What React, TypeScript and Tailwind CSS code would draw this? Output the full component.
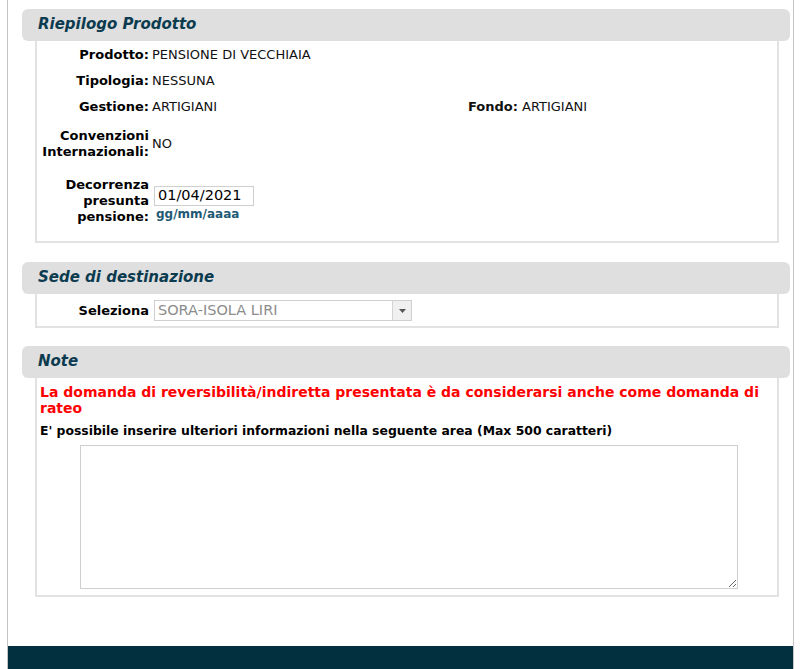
import React from "react";

const verdana = { fontFamily: '"DejaVu Sans", Verdana, sans-serif' };

function SectionHeader({ title }: { title: string }) {
  return (
    <div className="ml-[14px] mr-[3px] h-[32px] rounded-[6px] bg-[#dfdfdf] pl-[16px] pt-[3px]">
      <span className="text-[15px] font-bold italic leading-[18px] text-[#0c3b4f]">{title}</span>
    </div>
  );
}

function Label({ children }: { children: React.ReactNode }) {
  return (
    <div className="w-[112px] shrink-0 text-right text-[13px] font-bold leading-[16px] text-black">
      {children}
    </div>
  );
}

export default function App() {
  return (
    <div className="h-[669px] overflow-hidden bg-white" style={verdana}>
      <div className="ml-[7px] w-[787px] border-x border-[#c4c4c4] pt-[9px]">
        {/* Riepilogo Prodotto */}
        <SectionHeader title="Riepilogo Prodotto" />
        <div className="ml-[27px] mr-[14px] border-x-2 border-b-2 border-[#e2e2e2] pt-[1px] pb-[16px] text-[13px] text-[#111]">
          <div className="flex h-[26px] items-center">
            <Label>Prodotto:</Label>
            <span className="ml-[3px]">PENSIONE DI VECCHIAIA</span>
          </div>
          <div className="flex h-[26px] items-center">
            <Label>Tipologia:</Label>
            <span className="ml-[3px]">NESSUNA</span>
          </div>
          <div className="flex h-[26px] items-center">
            <Label>Gestione:</Label>
            <span className="ml-[3px] w-[316px]">ARTIGIANI</span>
            <span className="font-bold">Fondo:</span>
            <span className="ml-[4px]">ARTIGIANI</span>
          </div>
          <div className="flex items-center py-[8px]">
            <Label>
              Convenzioni
              <br />
              Internazionali:
            </Label>
            <span className="ml-[3px]">NO</span>
          </div>
          <div className="flex items-center pt-[9px]">
            <Label>
              Decorrenza
              <br />
              presunta
              <br />
              pensione:
            </Label>
            <div className="ml-[5px] mt-[5px] flex flex-col">
              <div className="flex h-[20px] w-[100px] items-center border border-[#cfcfcf] pl-[3px] text-[14.5px] text-black">
                01/04/2021
              </div>
              <span className="mt-[1px] ml-[2px] text-[12px] font-bold leading-[15px] text-[#1f5a74]">
                gg/mm/aaaa
              </span>
            </div>
          </div>
        </div>

        {/* Sede di destinazione */}
        <div className="mt-[19px]">
          <SectionHeader title="Sede di destinazione" />
        </div>
        <div className="ml-[27px] mr-[14px] flex items-center border-x-2 border-b-2 border-[#e2e2e2] pt-[6px] pb-[5px]">
          <Label>Seleziona</Label>
          <div className="ml-[5px] flex h-[21px] w-[258px] items-center border border-[#cfcfcf]">
            <span className="flex-1 pl-[3px] text-[14.5px] text-[#8c8c8c]">SORA-ISOLA LIRI</span>
            <div className="flex h-full w-[19px] items-center justify-center border-l border-[#d4d4d4] bg-[#f0f0f0]">
              <svg width="7" height="4" viewBox="0 0 7 4">
                <path d="M0 0h7L3.5 4z" fill="#555" />
              </svg>
            </div>
          </div>
        </div>

        {/* Note */}
        <div className="mt-[18px]">
          <SectionHeader title="Note" />
        </div>
        <div className="ml-[27px] mr-[14px] border-x-2 border-b-2 border-[#e2e2e2] pt-[6px] pb-[6px]">
          <p className="pl-[3px] pr-[4px] text-[14px] font-bold leading-[16px] text-[#ff0000]">
            La domanda di reversibilità/indiretta presentata è da considerarsi anche come domanda di rateo
          </p>
          <p className="mt-[7px] pl-[3px] text-[12.4px] font-bold leading-[16px] text-black">
            E' possibile inserire ulteriori informazioni nella seguente area (Max 500 caratteri)
          </p>
          <div className="mt-[6px] pl-[43px]">
            <textarea className="block h-[144px] w-[658px] border border-[#cfcfcf] bg-white outline-none" />
          </div>
        </div>

        {/* footer */}
        <div className="mt-[49px] h-[23px] bg-[#03303f]" />
      </div>
    </div>
  );
}
